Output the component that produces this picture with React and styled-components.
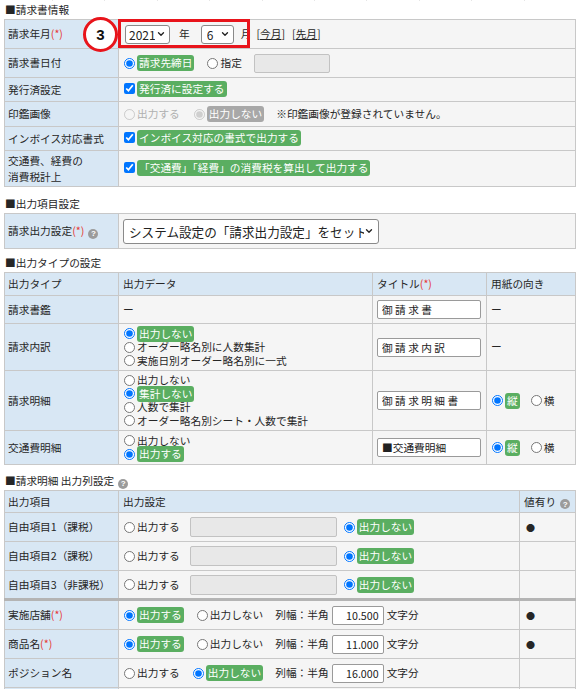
import React from 'react';
import styled, { createGlobalStyle } from 'styled-components';
import { ChevronDown } from 'lucide-react';

const GlobalStyle = createGlobalStyle`
  * { box-sizing: border-box; }
  body {
    margin: 0;
    background: #fff;
    color: #262626;
    font-family: "Noto Sans CJK JP", "Noto Sans", sans-serif;
    font-size: 10.7px;
  }
`;

const Page = styled.div`
  position: relative;
  width: 578px;
  padding: 0 2px 0 4px;
`;

const TopEdge = styled.div`
  display: flex;
  height: 1px;
  margin-left: 48px;
`;

const EdgeTick = styled.span`
  width: 53px;
  border-left: 1px solid #e6e6e6;
`;

const SectionTitle = styled.div`
  height: 18px;
  line-height: 18px;
  margin-top: ${p => p.$gap || 0}px;
  padding-left: 1px;
`;

const Table = styled.table`
  width: 572px;
  border-collapse: collapse;
  table-layout: fixed;
`;

const Row = styled.tr`
  height: ${p => p.$h}px;
`;

const Label = styled.th`
  background: #d8e7f4;
  border: 1px solid #c8c8c8;
  border-top-width: ${p => (p.$thick ? 3 : 1)}px;
  border-top-color: ${p => (p.$thick ? '#b4b4b4' : '#c8c8c8')};
  text-align: left;
  font-weight: normal;
  padding: 0 3px;
  line-height: 16px;
  vertical-align: middle;
`;

const Cell = styled.td`
  background: ${p => (p.$head ? '#d8e7f4' : '#f5f5f5')};
  border: 1px solid #c8c8c8;
  border-top-width: ${p => (p.$thick ? 3 : 1)}px;
  border-top-color: ${p => (p.$thick ? '#b4b4b4' : '#c8c8c8')};
  padding: 0 4px;
  line-height: 16px;
  vertical-align: middle;
`;

const Req = styled.span`
  color: #e53935;
`;

const Help = styled.span`
  display: inline-flex;
  align-items: center;
  justify-content: center;
  width: 10px;
  height: 10px;
  margin-left: 4px;
  border-radius: 50%;
  background: #9b9b9b;
  color: #fff;
  font: bold 8px "Liberation Sans", sans-serif;
  vertical-align: -1px;
`;

const Inline = styled.div`
  display: flex;
  align-items: center;
`;

const Stack = styled.div`
  display: flex;
  flex-direction: column;
`;

const Option = styled.label`
  display: inline-flex;
  align-items: center;
  height: ${p => (p.$tight ? '13.5px' : 'auto')};
  margin-left: ${p => p.$ml || 0}px;
  margin-right: ${p => p.$mr || 0}px;
  color: ${p => (p.$off ? '#b0b0b0' : 'inherit')};
  white-space: nowrap;
`;

const Radio = styled.input.attrs({ type: 'radio' })`
  width: 11px;
  height: 11px;
  margin: 0 2px 0 1px;
`;

const Check = styled.input.attrs({ type: 'checkbox' })`
  width: 11px;
  height: 11px;
  margin: 0 2px 0 1px;
`;

const Badge = styled.span`
  display: inline-block;
  height: 16px;
  line-height: 16px;
  padding: 0 2px;
  border-radius: 3px;
  background: ${p => (p.$muted ? '#a8a8a8' : '#5aae61')};
  color: #fff;
`;

const SelectWrap = styled.span`
  position: relative;
  display: block;
  margin-left: ${p => p.$ml || 0}px;
  svg {
    position: absolute;
    right: ${p => p.$arrow || 4}px;
    top: 50%;
    transform: translateY(-50%);
    pointer-events: none;
    color: #222;
  }
`;

const Select = styled.select`
  display: block;
  appearance: none;
  width: ${p => p.$w}px;
  height: ${p => p.$hgt || 19}px;
  padding: 0 14px 0 ${p => p.$pl || 4}px;
  border: 1px solid #8a8a8a;
  border-radius: 3px;
  background: #fff;
  color: #222;
  font-family: "Noto Sans CJK JP", "Noto Sans", sans-serif;
  font-size: ${p => p.$fs || 12}px;
`;

const TextBox = styled.input`
  display: block;
  width: ${p => p.$w}px;
  height: ${p => p.$hgt || 19}px;
  padding: 0 4px;
  border: 1px solid ${p => (p.disabled ? '#c2c2c2' : '#9a9a9a')};
  border-radius: 2px;
  background: ${p => (p.disabled ? '#e8e8e8' : '#fff')};
  color: #222;
  font-family: "Noto Sans CJK JP", "Noto Sans", sans-serif;
  font-size: 10.7px;
  text-align: ${p => (p.$right ? 'right' : 'left')};
`;

const LinkText = styled.span`
  margin-left: ${p => p.$ml || 0}px;
  u { text-decoration: underline; }
`;

const Unit = styled.span`
  margin: 0 ${p => p.$mr || 0}px 0 ${p => p.$ml || 0}px;
`;

const Dot = styled.span`
  font-size: 9px;
  padding-left: 2px;
`;

const Frame = styled.div`
  position: absolute;
  left: 118px;
  top: 19px;
  width: 132px;
  height: 29px;
  border: 3px solid #e8141b;
  pointer-events: none;
`;

const Marker = styled.div`
  position: absolute;
  left: 83px;
  top: 17px;
  width: 35px;
  height: 35px;
  border: 3px solid #e8141b;
  border-radius: 50%;
  background: #fff;
  display: flex;
  align-items: center;
  justify-content: center;
  color: #111;
  font: bold 15px "Liberation Sans", sans-serif;
`;

const ticks = Array.from({ length: 10 });

const columnRows = [
  { label: '自由項目1（課税）', free: true, mark: true },
  { label: '自由項目2（課税）', free: true },
  { label: '自由項目3（非課税）', free: true },
  { label: '実施店舗', req: true, on: true, width: '10.500', mark: true, thick: true },
  { label: '商品名', req: true, on: true, width: '11.000', mark: true },
  { label: 'ポジション名', on: false, width: '16.000' },
  { label: 'ポジション略名', on: false, width: '8.000' },
];

function ColumnRow({ row, idx }) {
  const name = `col${idx}`;
  return (
    <Row $h={row.thick ? 30 : 29}>
      <Label $thick={row.thick}>
        {row.label}
        {row.req && <Req>(*)</Req>}
      </Label>
      <Cell $thick={row.thick}>
        {row.free ? (
          <Inline>
            <Option $mr={10}><Radio name={name} />出力する</Option>
            <TextBox disabled $w={147} $hgt={20} />
            <Option $ml={6}><Radio name={name} defaultChecked /><Badge>出力しない</Badge></Option>
          </Inline>
        ) : (
          <Inline>
            <Option $mr={12}>
              <Radio name={name} defaultChecked={row.on} />
              {row.on ? <Badge>出力する</Badge> : '出力する'}
            </Option>
            <Option $mr={12}>
              <Radio name={name} defaultChecked={!row.on} />
              {row.on ? '出力しない' : <Badge>出力しない</Badge>}
            </Option>
            <Unit $mr={3}>列幅：半角</Unit>
            <TextBox $w={52} $hgt={19} $right defaultValue={row.width} />
            <Unit $ml={3}>文字分</Unit>
          </Inline>
        )}
      </Cell>
      <Cell $thick={row.thick}>{row.mark && <Dot>●</Dot>}</Cell>
    </Row>
  );
}

export default function App() {
  return (
    <Page>
      <GlobalStyle />
      <TopEdge>{ticks.map((_, i) => <EdgeTick key={i} />)}</TopEdge>

      <SectionTitle>■請求書情報</SectionTitle>
      <Table>
        <colgroup>
          <col style={{ width: 114 }} />
          <col />
        </colgroup>
        <tbody>
          <Row $h={29}>
            <Label>請求年月<Req>(*)</Req></Label>
            <Cell>
              <Inline>
                <SelectWrap $ml={2}>
                  <Select $w={45} $fs={12} $pl={3} defaultValue="2021">
                    <option>2020</option>
                    <option>2021</option>
                    <option>2022</option>
                  </Select>
                  <ChevronDown size={10} strokeWidth={3.2} />
                </SelectWrap>
                <Unit $ml={9} $mr={11}>年</Unit>
                <SelectWrap>
                  <Select $w={33} $fs={12} $pl={5} defaultValue="6">
                    {[1, 2, 3, 4, 5, 6, 7, 8, 9, 10, 11, 12].map(m => <option key={m}>{m}</option>)}
                  </Select>
                  <ChevronDown size={10} strokeWidth={3.2} />
                </SelectWrap>
                <Unit $ml={7} $mr={5}>月</Unit>
                <LinkText>[<u>今月</u>]</LinkText>
                <LinkText $ml={7}>[<u>先月</u>]</LinkText>
              </Inline>
            </Cell>
          </Row>
          <Row $h={29}>
            <Label>請求書日付</Label>
            <Cell>
              <Inline>
                <Option $mr={12}><Radio name="date" defaultChecked /><Badge>請求先締日</Badge></Option>
                <Option $mr={12}><Radio name="date" />指定</Option>
                <TextBox disabled $w={76} $hgt={19} />
              </Inline>
            </Cell>
          </Row>
          <Row $h={24}>
            <Label>発行済設定</Label>
            <Cell>
              <Option><Check defaultChecked /><Badge>発行済に設定する</Badge></Option>
            </Cell>
          </Row>
          <Row $h={25}>
            <Label>印鑑画像</Label>
            <Cell>
              <Inline>
                <Option $off $mr={13}><Radio name="seal" disabled />出力する</Option>
                <Option $mr={12}><Radio name="seal" disabled defaultChecked /><Badge $muted>出力しない</Badge></Option>
                <span>※印鑑画像が登録されていません。</span>
              </Inline>
            </Cell>
          </Row>
          <Row $h={24}>
            <Label>インボイス対応書式</Label>
            <Cell>
              <Option><Check defaultChecked /><Badge>インボイス対応の書式で出力する</Badge></Option>
            </Cell>
          </Row>
          <Row $h={36}>
            <Label>交通費、経費の<br />消費税計上</Label>
            <Cell>
              <Option><Check defaultChecked /><Badge>「交通費」「経費」の消費税を算出して出力する</Badge></Option>
            </Cell>
          </Row>
        </tbody>
      </Table>

      <SectionTitle $gap={8}>■出力項目設定</SectionTitle>
      <Table>
        <colgroup>
          <col style={{ width: 114 }} />
          <col />
        </colgroup>
        <tbody>
          <Row $h={35}>
            <Label>請求出力設定<Req>(*)</Req><Help>?</Help></Label>
            <Cell>
              <Inline>
                <SelectWrap $arrow={5}>
                  <Select $w={256} $hgt={25} $fs={12.6} $pl={5} defaultValue="sys">
                    <option value="sys">システム設定の「請求出力設定」をセット</option>
                  </Select>
                  <ChevronDown size={10} strokeWidth={3.2} />
                </SelectWrap>
              </Inline>
            </Cell>
          </Row>
        </tbody>
      </Table>

      <SectionTitle $gap={5}>■出力タイプの設定</SectionTitle>
      <Table>
        <colgroup>
          <col style={{ width: 114 }} />
          <col style={{ width: 254 }} />
          <col style={{ width: 114 }} />
          <col />
        </colgroup>
        <tbody>
          <Row $h={23}>
            <Label>出力タイプ</Label>
            <Cell $head>出力データ</Cell>
            <Cell $head>タイトル<Req>(*)</Req></Cell>
            <Cell $head>用紙の向き</Cell>
          </Row>
          <Row $h={28}>
            <Label>請求書鑑</Label>
            <Cell>ー</Cell>
            <Cell><TextBox $w={104} defaultValue="御 請 求 書" /></Cell>
            <Cell>ー</Cell>
          </Row>
          <Row $h={47}>
            <Label>請求内訳</Label>
            <Cell>
              <Stack>
                <Option $tight><Radio name="breakdown" defaultChecked /><Badge>出力しない</Badge></Option>
                <Option $tight><Radio name="breakdown" />オーダー略名別に人数集計</Option>
                <Option $tight><Radio name="breakdown" />実施日別オーダー略名別に一式</Option>
              </Stack>
            </Cell>
            <Cell><TextBox $w={104} defaultValue="御 請 求 内 訳" /></Cell>
            <Cell>ー</Cell>
          </Row>
          <Row $h={60}>
            <Label>請求明細</Label>
            <Cell>
              <Stack>
                <Option $tight><Radio name="detail" />出力しない</Option>
                <Option $tight><Radio name="detail" defaultChecked /><Badge>集計しない</Badge></Option>
                <Option $tight><Radio name="detail" />人数で集計</Option>
                <Option $tight><Radio name="detail" />オーダー略名別シート・人数で集計</Option>
              </Stack>
            </Cell>
            <Cell><TextBox $w={104} defaultValue="御 請 求 明 細 書" /></Cell>
            <Cell>
              <Inline>
                <Option $mr={10}><Radio name="ori1" defaultChecked /><Badge>縦</Badge></Option>
                <Option><Radio name="ori1" />横</Option>
              </Inline>
            </Cell>
          </Row>
          <Row $h={34}>
            <Label>交通費明細</Label>
            <Cell>
              <Stack>
                <Option $tight><Radio name="travel" />出力しない</Option>
                <Option $tight><Radio name="travel" defaultChecked /><Badge>出力する</Badge></Option>
              </Stack>
            </Cell>
            <Cell><TextBox $w={104} defaultValue="■交通費明細" /></Cell>
            <Cell>
              <Inline>
                <Option $mr={10}><Radio name="ori2" defaultChecked /><Badge>縦</Badge></Option>
                <Option><Radio name="ori2" />横</Option>
              </Inline>
            </Cell>
          </Row>
        </tbody>
      </Table>

      <SectionTitle $gap={7}>■請求明細 出力列設定<Help>?</Help></SectionTitle>
      <Table>
        <colgroup>
          <col style={{ width: 114 }} />
          <col style={{ width: 401 }} />
          <col />
        </colgroup>
        <tbody>
          <Row $h={22}>
            <Label>出力項目</Label>
            <Cell $head>出力設定</Cell>
            <Cell $head>値有り<Help>?</Help></Cell>
          </Row>
          {columnRows.map((row, i) => <ColumnRow key={i} row={row} idx={i} />)}
        </tbody>
      </Table>

      <Frame />
      <Marker>3</Marker>
    </Page>
  );
}
